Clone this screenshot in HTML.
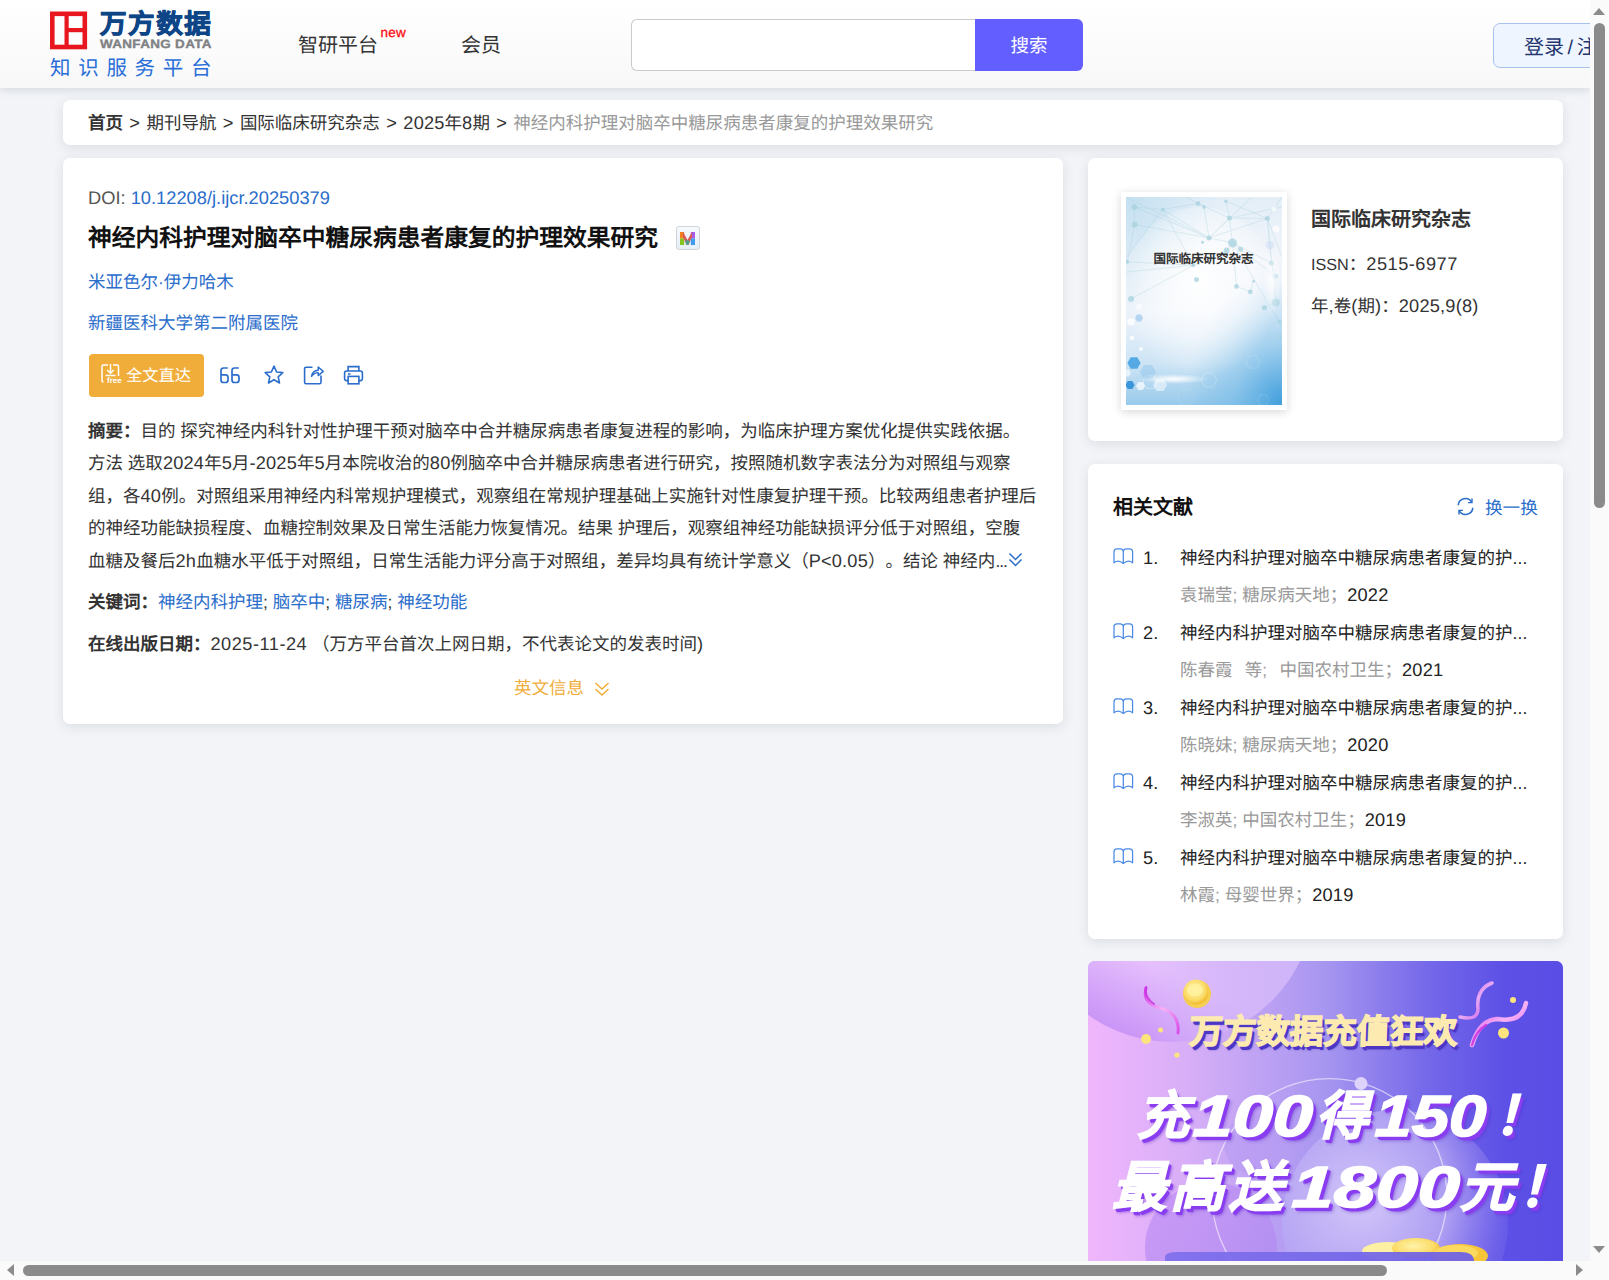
<!DOCTYPE html>
<html lang="zh-CN">
<head>
<meta charset="utf-8">
<title>万方数据知识服务平台</title>
<style>
*{box-sizing:border-box;margin:0;padding:0}
html,body{width:1609px;height:1280px;overflow:hidden}
body{position:relative;background:#f2f4f8;font-family:"Liberation Sans",sans-serif;color:#333;font-size:17.5px;text-rendering:geometricPrecision;text-spacing-trim:space-all}
.l{font-size:1.04em;letter-spacing:.2px}
.sep{word-spacing:1.05px}
.t{position:absolute;white-space:nowrap;line-height:26px;height:26px;margin-top:0.6px}
.abs{position:absolute}
.card{position:absolute;background:#fff;border-radius:7px;box-shadow:0 3px 12px rgba(45,55,65,.115)}
.b{font-weight:bold}
.blue{color:#2a6dcb}
.gray{color:#999}
/* header */
#hdr{position:absolute;left:0;top:0;width:1590px;height:88px;background:linear-gradient(#ffffff,#f8f8f9);box-shadow:0 2px 8px rgba(60,70,100,.16)}
.bt{position:absolute;white-space:nowrap;font-weight:bold;font-style:italic;line-height:64px;height:64px;transform-origin:0 50%}
.big{color:#fff;-webkit-text-stroke:1.6px #fff;text-shadow:2px 3px 0 #8a3df0,3px 4px 0 #8a3df0,4px 5px 3px rgba(90,40,200,.45)}
/* scrollbars */
#vs{position:absolute;left:1590px;top:0;width:19px;height:1280px;background:#fafafa}
#hs{position:absolute;left:0;top:1261px;width:1609px;height:19px;background:#fafafa}
.thumb{position:absolute;background:#8b8b8b;border-radius:6px}
.arr{position:absolute;width:0;height:0;border-style:solid;border-color:transparent}
</style>
</head>
<body>

<!-- ================= HEADER ================= -->
<div id="hdr">
  <!-- logo -->
  <svg class="abs" style="left:50px;top:11px" width="38" height="39" viewBox="0 0 38 39">
    <rect x="2.3" y="2.8" width="32.5" height="33.2" fill="none" stroke="#e8161f" stroke-width="4.6"/>
    <rect x="14.5" y="2" width="4.2" height="34" fill="#e8161f"/>
    <rect x="16" y="17" width="19" height="4.2" fill="#e8161f"/>
  </svg>
  <div class="t b" style="left:100px;top:8.5px;font-size:26.5px;line-height:30px;height:30px;color:#0e4587;letter-spacing:1.6px;-webkit-text-stroke:0.9px #0e4587">万方数据</div>
  <div class="t b" style="left:99.5px;top:37.6px;font-size:12px;line-height:13px;height:13px;color:#808184;letter-spacing:0.3px;-webkit-text-stroke:0.35px #808184;transform:scaleX(1.12);transform-origin:0 50%">WANFANG DATA</div>
  <div class="t" style="left:50px;top:55px;font-size:20.5px;line-height:26px;color:#2a6fd8;letter-spacing:7.7px">知识服务平台</div>

  <div class="t" style="left:298px;top:32px;font-size:20px;color:#333">智研平台</div>
  <div class="t" style="left:380.5px;top:24.6px;font-size:13.5px;line-height:16px;height:16px;color:#fa0f14;letter-spacing:0.3px;-webkit-text-stroke:0.3px #fa0f14">new</div>
  <div class="t" style="left:461px;top:32px;font-size:20px;color:#333">会员</div>

  <!-- search -->
  <div class="abs" style="left:631px;top:19px;width:346px;height:52px;border:1px solid #c9c9cf;border-right:none;border-radius:6px 0 0 6px;background:#fff"></div>
  <div class="abs" style="left:975px;top:19px;width:108px;height:52px;background:#635eff;border-radius:0 6px 6px 0"></div>
  <div class="t" style="left:975px;top:32px;width:108px;text-align:center;color:#fff;font-size:18.5px">搜索</div>

  <!-- login -->
  <div class="abs" style="left:1493px;top:23px;width:140px;height:45px;border:1px solid #a9c2ec;border-radius:7px;background:#eef5ff"></div>
  <div class="t" style="left:1524px;top:34px;font-size:20px;color:#24356f;word-spacing:-2px">登录 / 注册</div>
</div>

<!-- ================= BREADCRUMB ================= -->
<div class="card" style="left:63px;top:100px;width:1500px;height:45px"></div>
<div class="t" style="left:88px;top:109px;color:#333"><span class="b">首页</span><span class="l sep"> &gt; </span>期刊导航<span class="l sep"> &gt; </span>国际临床研究杂志<span class="l sep"> &gt; </span><span class="l">2025</span>年<span class="l">8</span>期<span class="l sep"> &gt; </span><span class="gray">神经内科护理对脑卒中糖尿病患者康复的护理效果研究</span></div>

<!-- ================= MAIN CARD ================= -->
<div class="card" id="main" style="left:63px;top:158px;width:1000px;height:566px">
  <div class="t" style="left:25px;top:26px;font-size:18.3px;color:#555">DOI: <span class="blue">10.12208/j.ijcr.20250379</span></div>
  <div class="t b" style="left:25px;top:65px;font-size:23.75px;line-height:30px;height:30px;color:#111">神经内科护理对脑卒中糖尿病患者康复的护理效果研究</div>
  <div class="abs" style="left:613px;top:68px;width:24px;height:24px;border:1.5px solid #d0d3d8;border-radius:3px;background:linear-gradient(#f7fafd,#e6eef8)">
    <svg class="abs" style="left:3px;top:4.5px" width="15" height="13" viewBox="0 0 15 13">
      <rect x="0" y="0" width="4.2" height="6.5" fill="#f28020"/><rect x="0" y="6.5" width="4.2" height="6.5" fill="#86c520"/>
      <rect x="10.8" y="0" width="4.2" height="6.5" fill="#a45fe0"/><rect x="10.8" y="6.5" width="4.2" height="6.5" fill="#3f9cec"/>
      <path d="M3 0 L7.5 8 L12 0 L12 5 L8.5 13 L6.5 13 L3 5 Z" fill="#d85a5a"/>
      <path d="M5.2 9 L7.5 8 L9.8 9 L8.5 13 L6.5 13 Z" fill="#4da08f"/>
    </svg>
  </div>
  <div class="t blue" style="left:25px;top:110px">米亚色尔·伊力哈木</div>
  <div class="t blue" style="left:25px;top:151px">新疆医科大学第二附属医院</div>

  <!-- button -->
  <div class="abs" style="left:26px;top:196px;width:115px;height:43px;background:#f0ad3a;border-radius:4px"></div>
  <svg class="abs" style="left:37px;top:205px" width="24" height="24" viewBox="0 0 24 24" fill="none" stroke="#fff" stroke-width="1.5">
    <path d="M8 2 H3.5 Q2 2 2 3.5 V17.5 Q2 19 3.5 19"/>
    <path d="M13 2 H17 Q18.5 2 18.5 3.5 V13"/>
    <path d="M10.5 1 V10 M7.2 7 L10.5 10.3 L13.8 7"/>
    <path d="M5.5 12.5 H15.5"/>
  </svg>
  <div class="t b" style="left:44px;top:217px;font-size:8px;line-height:10px;height:10px;color:#fff">free</div>
  <div class="t" style="left:63px;top:204px;color:#fff;font-size:16.25px">全文直达</div>

  <!-- icons -->
  <svg class="abs" style="left:156px;top:208px" width="22" height="18" viewBox="0 0 22 18" fill="none" stroke="#2a6dcb" stroke-width="1.7">
    <path d="M8.8 2 H4.5 Q2 2 2 4.5 V14 Q2 16.5 4.5 16.5 H6.5 Q9 16.5 9 14 V11.3 Q9 8.8 6.5 8.800 H2"/>
    <path d="M19.8 2 H15.5 Q13 2 13 4.5 V14 Q13 16.5 15.5 16.5 H17.5 Q20 16.5 20 14 V11.3 Q20 8.8 17.5 8.800 H13"/>
  </svg>
  <svg class="abs" style="left:200px;top:206px" width="22" height="22" viewBox="0 0 22 22" fill="none" stroke="#2a6dcb" stroke-width="1.6" stroke-linejoin="round">
    <path d="M11 2.2 L13.6 8 L19.8 8.6 L15.2 12.8 L16.5 19 L11 15.8 L5.5 19 L6.8 12.8 L2.2 8.6 L8.4 8 Z"/>
  </svg>
  <svg class="abs" style="left:240px;top:206px" width="22" height="22" viewBox="0 0 22 22" fill="none" stroke="#2a6dcb" stroke-width="1.6">
    <path d="M9.5 3.2 H3 Q1.6 3.2 1.6 4.6 V18.3 Q1.6 19.7 3 19.7 H16.6 Q18 19.7 18 18.3 V11.5"/>
    <path d="M8.6 12.5 Q9.3 6.6 15.2 6.2 V3 L20.2 7.4 L15.2 11.6 V8.6 Q11 8.6 8.6 12.5 Z" stroke-linejoin="round" stroke-width="1.4"/>
  </svg>
  <svg class="abs" style="left:280px;top:206px" width="22" height="22" viewBox="0 0 22 22" fill="none" stroke="#2a6dcb" stroke-width="1.6">
    <path d="M5.1 7 V2.6 H15.9 V7"/>
    <rect x="1.6" y="7" width="17.8" height="9.6" rx="2"/>
    <rect x="5.1" y="12.4" width="10.8" height="7.4" fill="#fff"/>
    <path d="M5 10 H7.4"/>
  </svg>

  <!-- abstract -->
  <div class="t" style="left:25px;top:259px"><span class="b">摘要：</span>目的 探究神经内科针对性护理干预对脑卒中合并糖尿病患者康复进程的影响，为临床护理方案优化提供实践依据。</div>
  <div class="t" style="left:25px;top:291.5px">方法 选取<span class="l">2024</span>年<span class="l">5</span>月<span class="l">-2025</span>年<span class="l">5</span>月本院收治的<span class="l">80</span>例脑卒中合并糖尿病患者进行研究，按照随机数字表法分为对照组与观察</div>
  <div class="t" style="left:25px;top:324px">组，各<span class="l">40</span>例。对照组采用神经内科常规护理模式，观察组在常规护理基础上实施针对性康复护理干预。比较两组患者护理后</div>
  <div class="t" style="left:25px;top:356.5px">的神经功能缺损程度、血糖控制效果及日常生活能力恢复情况。结果 护理后，观察组神经功能缺损评分低于对照组，空腹</div>
  <div class="t" style="left:25px;top:389px">血糖及餐后<span class="l">2h</span>血糖水平低于对照组，日常生活能力评分高于对照组，差异均具有统计学意义（<span class="l">P&lt;0.05</span>）。结论 神经内<span style="letter-spacing:-1px">...</span></div>
  <svg class="abs" style="left:945px;top:394px" width="15" height="16" viewBox="0 0 15 16" fill="none" stroke="#2a6dcb" stroke-width="1.5"><path d="M1.5 1.5 L7.5 7.5 L13.5 1.5 M1.5 7.5 L7.5 13.5 L13.5 7.5"/></svg>

  <div class="t" style="left:25px;top:430px"><span class="b">关键词：</span><span class="blue">神经内科护理</span>; <span class="blue">脑卒中</span>; <span class="blue">糖尿病</span>; <span class="blue">神经功能</span></div>
  <div class="t" style="left:25px;top:472px"><span class="b">在线出版日期：</span><span class="l" style="letter-spacing:.5px">2025-11-24</span>&nbsp;（万方平台首次上网日期，不代表论文的发表时间<span class="l">)</span></div>
  <div class="t" style="left:451px;top:516px;color:#f0ad3a">英文信息</div>
  <svg class="abs" style="left:531px;top:523px" width="16" height="16" viewBox="0 0 16 16" fill="none" stroke="#f0ad3a" stroke-width="1.5"><path d="M1.5 2 L8 8 L14.500 2 M1.5 8 L8 14 L14.5 8"/></svg>
</div>

<!-- ================= JOURNAL CARD ================= -->
<div class="card" style="left:1088px;top:158px;width:475px;height:283px">
  <div class="abs" style="left:33px;top:34px;width:166px;height:218px;background:#fff;box-shadow:0 2px 9px rgba(0,0,0,.16)"></div>
  <div class="abs" id="cover" style="left:38px;top:39px;width:156px;height:208px;overflow:hidden;background:#dcebf6">
    <svg width="156" height="208" viewBox="0 0 156 208" style="display:block">
      <defs>
        <linearGradient id="cv1" x1="0" y1="0" x2="0" y2="1"><stop offset="0" stop-color="#e3eef7"/><stop offset=".3" stop-color="#f2f5fa"/><stop offset=".55" stop-color="#edf3fa"/><stop offset=".8" stop-color="#cde4f5"/><stop offset="1" stop-color="#98caeb"/></linearGradient>
        <radialGradient id="cv2" cx=".5" cy=".4" r=".5"><stop offset="0" stop-color="#fff" stop-opacity=".95"/><stop offset=".6" stop-color="#fff" stop-opacity=".5"/><stop offset="1" stop-color="#fff" stop-opacity="0"/></radialGradient>
        <radialGradient id="cv3" cx="1" cy="1" r=".62"><stop offset="0" stop-color="#3d9cdb" stop-opacity=".95"/><stop offset=".5" stop-color="#5aaee3" stop-opacity=".4"/><stop offset="1" stop-color="#5aaee3" stop-opacity="0"/></radialGradient>
        <radialGradient id="cv4" cx="0" cy="0" r=".6"><stop offset="0" stop-color="#bcdcef" stop-opacity=".8"/><stop offset="1" stop-color="#bcdcef" stop-opacity="0"/></radialGradient>
        <radialGradient id="cv5" cx=".5" cy=".5" r=".5"><stop offset="0" stop-color="#fff" stop-opacity="1"/><stop offset="1" stop-color="#fff" stop-opacity="0"/></radialGradient>
      </defs>
      <rect width="156" height="208" fill="url(#cv1)"/>
      <rect width="156" height="208" fill="url(#cv4)"/>
      <rect width="156" height="208" fill="url(#cv3)"/>
      <ellipse cx="74" cy="105" rx="80" ry="95" fill="url(#cv2)"/>
      <g stroke="#9fcdd9" stroke-width="0.7" opacity=".42"><line x1="8.3" y1="10.1" x2="36.7" y2="12.5"/><line x1="8.3" y1="10.1" x2="8.6" y2="27.5"/><line x1="36.7" y1="12.5" x2="83.0" y2="40.9"/><line x1="36.7" y1="12.5" x2="67.4" y2="68.3"/><line x1="8.3" y1="10.1" x2="83.0" y2="40.9"/><line x1="8.6" y1="27.5" x2="83.0" y2="40.9"/><line x1="72.0" y1="6.4" x2="78.0" y2="10.1"/><line x1="72.0" y1="6.4" x2="103.5" y2="21.1"/><line x1="78.0" y1="10.1" x2="83.0" y2="40.9"/><line x1="99.9" y1="4.2" x2="103.5" y2="21.1"/><line x1="103.5" y1="21.1" x2="141.4" y2="21.5"/><line x1="103.5" y1="21.1" x2="106.5" y2="45.9"/><line x1="103.5" y1="21.1" x2="83.0" y2="40.9"/><line x1="83.0" y1="40.9" x2="106.5" y2="45.9"/><line x1="106.5" y1="45.9" x2="114.6" y2="52.3"/><line x1="106.5" y1="45.9" x2="100.6" y2="53.6"/><line x1="100.6" y1="53.6" x2="67.4" y2="68.3"/><line x1="1.3" y1="64.8" x2="67.4" y2="68.3"/><line x1="5.0" y1="101.9" x2="67.4" y2="68.3"/><line x1="106.5" y1="45.9" x2="110.5" y2="89.4"/><line x1="110.5" y1="89.4" x2="124.3" y2="94.9"/><line x1="124.3" y1="94.9" x2="127.6" y2="84.1"/><line x1="114.6" y1="52.3" x2="149.6" y2="79.3"/><line x1="141.4" y1="21.5" x2="145.4" y2="66.1"/><line x1="145.4" y1="66.1" x2="149.6" y2="79.3"/><line x1="149.6" y1="79.3" x2="149.6" y2="105.6"/><line x1="149.6" y1="105.6" x2="138.4" y2="110.7"/><line x1="141.4" y1="21.5" x2="149.6" y2="105.6"/><line x1="99.9" y1="4.2" x2="141.4" y2="21.5"/><line x1="36.7" y1="12.5" x2="72.0" y2="6.4"/><line x1="8.6" y1="27.5" x2="1.3" y2="64.8"/><line x1="106.5" y1="45.9" x2="145.4" y2="66.1"/><line x1="83.0" y1="40.9" x2="141.4" y2="21.5"/><line x1="0.0" y1="0.0" x2="83.0" y2="40.9"/><line x1="126.0" y1="0.0" x2="83.0" y2="40.9"/><line x1="60.0" y1="0.0" x2="72.0" y2="6.4"/><line x1="156.0" y1="10.0" x2="103.5" y2="21.1"/><line x1="156.0" y1="0.0" x2="141.4" y2="21.5"/><line x1="0.0" y1="75.0" x2="67.4" y2="68.3"/><line x1="36.7" y1="12.5" x2="0.0" y2="60.0"/><line x1="141.4" y1="21.5" x2="156.0" y2="60.0"/><line x1="106.5" y1="45.9" x2="156.0" y2="130.0"/></g>
      <g fill="#a7d3df" opacity=".75"><circle cx="8.3" cy="10.1" r="3.0"/><circle cx="8.6" cy="27.5" r="3.0"/><circle cx="36.7" cy="12.5" r="2.0"/><circle cx="72.0" cy="6.4" r="2.4"/><circle cx="78.0" cy="10.1" r="1.8"/><circle cx="99.9" cy="4.2" r="1.8"/><circle cx="103.5" cy="21.1" r="2.5"/><circle cx="141.4" cy="21.5" r="2.5"/><circle cx="83.0" cy="40.9" r="2.5"/><circle cx="76.6" cy="45.3" r="1.5"/><circle cx="106.5" cy="45.9" r="4.5"/><circle cx="114.6" cy="52.3" r="2.5"/><circle cx="100.6" cy="53.6" r="3.0"/><circle cx="67.4" cy="68.3" r="2.0"/><circle cx="70.5" cy="82.6" r="2.5"/><circle cx="110.5" cy="89.4" r="2.4"/><circle cx="124.3" cy="94.9" r="2.4"/><circle cx="127.6" cy="84.1" r="1.5"/><circle cx="5.0" cy="101.9" r="3.0"/><circle cx="149.6" cy="79.3" r="2.5"/><circle cx="149.6" cy="105.6" r="4.0"/><circle cx="138.4" cy="110.7" r="2.5"/><circle cx="145.4" cy="66.1" r="2.5"/><circle cx="1.3" cy="64.8" r="2.0"/><circle cx="153.7" cy="124.8" r="2.0"/><circle cx="153.7" cy="139.5" r="2.0"/></g>
      <polygon points="9.2,125.0 7.1,128.6 2.9,128.6 0.8,125.0 2.9,121.4 7.1,121.4" fill="#fff" opacity="0.8"/><polygon points="17.0,121.0 15.0,124.5 11.0,124.5 9.0,121.0 11.0,117.5 15.0,117.5" fill="#9cc8ee" opacity="0.7"/><polygon points="16.6,110.0 14.8,113.1 11.2,113.1 9.4,110.0 11.2,106.9 14.8,106.9" fill="#fff" opacity="0.55"/><polygon points="8.6,141.0 7.3,143.3 4.7,143.3 3.4,141.0 4.7,138.7 7.3,138.7" fill="#fff" opacity="0.8"/><polygon points="14.6,166.0 11.3,171.7 4.7,171.7 1.4,166.0 4.7,160.3 11.3,160.3" fill="#3f9fe0" opacity="0.85"/><polygon points="8.6,188.0 6.3,192.0 1.7,192.0 -0.6,188.0 1.7,184.0 6.3,184.0" fill="#2e8fd8" opacity="0.9"/><polygon points="19.1,189.0 16.8,193.0 12.2,193.0 9.9,189.0 12.2,185.0 16.8,185.0" fill="#fff" opacity="0.7"/><polygon points="31.4,185.0 27.7,191.4 20.3,191.4 16.6,185.0 20.3,178.6 27.7,178.6" fill="none" stroke="#fff" stroke-width="0.7" opacity="0.6"/><polygon points="41.0,188.0 37.5,194.1 30.5,194.1 27.0,188.0 30.5,181.9 37.5,181.9" fill="#fff" opacity="0.5"/><polygon points="91.0,183.0 87.0,189.9 79.0,189.9 75.0,183.0 79.0,176.1 87.0,176.1" fill="none" stroke="#fff" stroke-width="0.7" opacity="0.35"/><polygon points="134.0,165.0 130.5,171.1 123.5,171.1 120.0,165.0 123.5,158.9 130.5,158.9" fill="none" stroke="#fff" stroke-width="0.7" opacity="0.25"/><polygon points="143.0,203.0 140.0,208.2 134.0,208.2 131.0,203.0 134.0,197.8 140.0,197.8" fill="none" stroke="#fff" stroke-width="0.7" opacity="0.2"/><polygon points="17.0,152.0 16.0,153.7 14.0,153.7 13.0,152.0 14.0,150.3 16.0,150.3" fill="#fff" opacity="0.9"/><polygon points="30.0,175.0 26.0,181.9 18.0,181.9 14.0,175.0 18.0,168.1 26.0,168.1" fill="#7fbdea" opacity="0.35"/><polygon points="69.0,200.0 64.5,207.8 55.5,207.8 51.0,200.0 55.5,192.2 64.5,192.2" fill="none" stroke="#fff" stroke-width="0.7" opacity="0.15"/><polygon points="5.0,176.0 3.0,179.5 -1.0,179.5 -3.0,176.0 -1.0,172.5 3.0,172.5" fill="#fff" opacity="0.6"/><polygon points="154.0,32.0 152.0,35.5 148.0,35.5 146.0,32.0 148.0,28.5 152.0,28.5" fill="#fff" opacity="0.7"/><polygon points="148.5,48.0 146.2,51.9 141.8,51.9 139.5,48.0 141.8,44.1 146.2,44.1" fill="#c9d9f3" opacity="0.5"/><polygon points="150.6,12.0 149.3,14.3 146.7,14.3 145.4,12.0 146.7,9.7 149.3,9.7" fill="#fff" opacity="0.7"/>
      <ellipse cx="48" cy="182" rx="34" ry="5" fill="url(#cv5)"/>
      <ellipse cx="146" cy="85" rx="9" ry="34" fill="url(#cv5)" opacity=".8"/>
    </svg>
  </div>
  <div class="t b" style="left:65.5px;top:87px;font-size:12.5px;color:#333">国际临床研究杂志</div>
  <div class="t b" style="left:223px;top:48px;font-size:20px;color:#333">国际临床研究杂志</div>
  <div class="t" style="left:223px;top:92px;color:#333"><span style="font-size:16.2px">ISSN</span>：<span class="l" style="letter-spacing:.5px">2515-6977</span></div>
  <div class="t" style="left:223px;top:134px;color:#333">年<span class="l">,</span>卷<span class="l">(</span>期<span class="l">)</span>：<span class="l">2025,9(8)</span></div>
</div>

<!-- ================= RELATED ================= -->
<div class="card" id="rel" style="left:1088px;top:464px;width:475px;height:475px">
  <div class="t b" style="left:25px;top:30px;font-size:20px;color:#111">相关文献</div>
  <svg class="abs" style="left:368px;top:33px" width="19" height="19" viewBox="0 0 19 19" fill="none" stroke="#2a6dcb" stroke-width="1.6"><path d="M2.2 8.2 A7.2 7.2 0 0 1 15.6 5.2 M16.8 10.8 A7.2 7.2 0 0 1 3.4 13.8"/><path d="M16 1.6 V5.6 H12 M3 17.400 V13.4 H7" stroke-width="1.4"/></svg>
  <div class="t blue" style="left:397px;top:30px;font-size:17.6px">换一换</div>
  <svg class="abs" style="left:25px;top:84px" width="21" height="17" viewBox="0 0 21 17" fill="none" stroke="#4a8ae6" stroke-width="1.25" stroke-linejoin="round"><path d="M10.3 15.6 Q5.5 11.2 1 14.8 V3.8 Q1 0.8 4 0.8 H7 Q10.3 0.8 10.3 4.2 V15.6 Q15.1 11.2 19.6 14.8 V3.8 Q19.6 0.8 16.6 0.8 H13.6 Q10.3 0.8 10.3 4.2"/></svg>
  <div class="t" style="left:55px;top:80px;color:#222"><span class="l">1.</span></div>
  <div class="t" style="left:92px;top:80px;color:#222">神经内科护理对脑卒中糖尿病患者康复的护<span style="letter-spacing:0.2px">...</span></div>
  <div class="t" style="left:92px;top:117.5px;color:#999">袁瑞莹; 糖尿病天地；<span class="l" style="color:#222">2022</span></div>
  <svg class="abs" style="left:25px;top:159px" width="21" height="17" viewBox="0 0 21 17" fill="none" stroke="#4a8ae6" stroke-width="1.25" stroke-linejoin="round"><path d="M10.3 15.6 Q5.5 11.2 1 14.8 V3.8 Q1 0.8 4 0.8 H7 Q10.3 0.8 10.3 4.2 V15.6 Q15.1 11.2 19.6 14.8 V3.8 Q19.6 0.8 16.6 0.8 H13.6 Q10.3 0.8 10.3 4.2"/></svg>
  <div class="t" style="left:55px;top:155px;color:#222"><span class="l">2.</span></div>
  <div class="t" style="left:92px;top:155px;color:#222">神经内科护理对脑卒中糖尿病患者康复的护<span style="letter-spacing:0.2px">...</span></div>
  <div class="t" style="left:92px;top:192.5px;color:#999;word-spacing:1.3px">陈春霞&nbsp; 等;&nbsp; 中国农村卫生；<span class="l" style="color:#222">2021</span></div>
  <svg class="abs" style="left:25px;top:234px" width="21" height="17" viewBox="0 0 21 17" fill="none" stroke="#4a8ae6" stroke-width="1.25" stroke-linejoin="round"><path d="M10.3 15.6 Q5.5 11.2 1 14.8 V3.8 Q1 0.8 4 0.8 H7 Q10.3 0.8 10.3 4.2 V15.6 Q15.1 11.2 19.6 14.8 V3.8 Q19.6 0.8 16.6 0.8 H13.6 Q10.3 0.8 10.3 4.2"/></svg>
  <div class="t" style="left:55px;top:230px;color:#222"><span class="l">3.</span></div>
  <div class="t" style="left:92px;top:230px;color:#222">神经内科护理对脑卒中糖尿病患者康复的护<span style="letter-spacing:0.2px">...</span></div>
  <div class="t" style="left:92px;top:267.5px;color:#999">陈晓妹; 糖尿病天地；<span class="l" style="color:#222">2020</span></div>
  <svg class="abs" style="left:25px;top:309px" width="21" height="17" viewBox="0 0 21 17" fill="none" stroke="#4a8ae6" stroke-width="1.25" stroke-linejoin="round"><path d="M10.3 15.6 Q5.5 11.2 1 14.8 V3.8 Q1 0.8 4 0.8 H7 Q10.3 0.8 10.3 4.2 V15.6 Q15.1 11.2 19.6 14.8 V3.8 Q19.6 0.8 16.6 0.8 H13.6 Q10.3 0.8 10.3 4.2"/></svg>
  <div class="t" style="left:55px;top:305px;color:#222"><span class="l">4.</span></div>
  <div class="t" style="left:92px;top:305px;color:#222">神经内科护理对脑卒中糖尿病患者康复的护<span style="letter-spacing:0.2px">...</span></div>
  <div class="t" style="left:92px;top:342.5px;color:#999">李淑英; 中国农村卫生；<span class="l" style="color:#222">2019</span></div>
  <svg class="abs" style="left:25px;top:384px" width="21" height="17" viewBox="0 0 21 17" fill="none" stroke="#4a8ae6" stroke-width="1.25" stroke-linejoin="round"><path d="M10.3 15.6 Q5.5 11.2 1 14.8 V3.8 Q1 0.8 4 0.8 H7 Q10.3 0.8 10.3 4.2 V15.6 Q15.1 11.2 19.6 14.8 V3.8 Q19.6 0.8 16.6 0.8 H13.6 Q10.3 0.8 10.3 4.2"/></svg>
  <div class="t" style="left:55px;top:380px;color:#222"><span class="l">5.</span></div>
  <div class="t" style="left:92px;top:380px;color:#222">神经内科护理对脑卒中糖尿病患者康复的护<span style="letter-spacing:0.2px">...</span></div>
  <div class="t" style="left:92px;top:417.5px;color:#999">林霞; 母婴世界；<span class="l" style="color:#222">2019</span></div>
</div>

<!-- ================= BANNER ================= -->
<div class="abs" id="banner" style="left:1088px;top:961px;width:475px;height:300px;border-radius:7px 7px 0 0;overflow:hidden;background:#a796f0">
  <svg class="abs" style="left:0;top:0" width="475" height="300" viewBox="0 0 475 300">
    <defs>
      <linearGradient id="bn1" x1="0" y1="0" x2="1" y2="0"><stop offset="0" stop-color="#f0b6fc"/><stop offset=".22" stop-color="#d6aef7"/><stop offset=".5" stop-color="#a796f0"/><stop offset=".72" stop-color="#7467e9"/><stop offset=".88" stop-color="#5c50e6"/><stop offset="1" stop-color="#594de5"/></linearGradient>
      <linearGradient id="bn2" gradientUnits="userSpaceOnUse" x1="60" y1="0" x2="20" y2="85"><stop offset="0" stop-color="#e6c0fd"/><stop offset=".55" stop-color="#d3a2f9"/><stop offset="1" stop-color="#c38df5"/></linearGradient>
      <linearGradient id="bn2b" gradientUnits="userSpaceOnUse" x1="60" y1="0" x2="230" y2="0"><stop offset="0" stop-color="#cdb2f8" stop-opacity="0"/><stop offset=".5" stop-color="#cdb2f8" stop-opacity=".7"/><stop offset="1" stop-color="#c4b0f8" stop-opacity=".75"/></linearGradient>
      <radialGradient id="bn3" cx=".35" cy=".4" r=".65"><stop offset="0" stop-color="#d3c7f9"/><stop offset=".6" stop-color="#b7a7f4" stop-opacity=".85"/><stop offset="1" stop-color="#8d7eee" stop-opacity=".25"/></radialGradient>
      <linearGradient id="bn4" x1="0" y1="0" x2="1" y2="1"><stop offset="0" stop-color="#c795f6"/><stop offset="1" stop-color="#a985ef" stop-opacity=".7"/></linearGradient>
      <linearGradient id="bn5" x1="0" y1="0" x2="1" y2="0"><stop offset="0" stop-color="#7f70ec"/><stop offset="1" stop-color="#6d5fe6"/></linearGradient>
      <radialGradient id="coin" cx=".45" cy=".4" r=".6"><stop offset="0" stop-color="#fff3a8"/><stop offset=".7" stop-color="#fbdc6a"/><stop offset="1" stop-color="#f3b928"/></radialGradient>
      <linearGradient id="rib" x1="0" y1="0" x2="1" y2="1"><stop offset="0" stop-color="#d23be8"/><stop offset=".5" stop-color="#f6b3f6"/><stop offset="1" stop-color="#d94fe9"/></linearGradient>
    </defs>
    <rect width="475" height="300" fill="url(#bn1)"/>
    <circle cx="83.5" cy="-61.4" r="142.300" fill="url(#bn2)"/><circle cx="83.5" cy="-61.4" r="142.300" fill="url(#bn2b)"/>
    <circle cx="307" cy="262" r="113" fill="url(#bn3)"/>
    <circle cx="123" cy="287" r="66" fill="url(#bn4)" opacity=".85"/>
    <circle cx="166" cy="183" r="30" fill="#b79bf2" opacity=".55"/>
    <circle cx="241.5" cy="235" r="117.400" fill="none" stroke="#fff" stroke-opacity=".55" stroke-width="1.4"/>
    <circle cx="273" cy="122.500" r="6.5" fill="#ddd2f9"/>
    
    <!-- coins bottom -->
    <ellipse cx="300" cy="290" rx="26" ry="9" fill="#fdf0a2"/>
    <ellipse cx="328" cy="287" rx="24" ry="10" fill="url(#coin)"/>
    <ellipse cx="372" cy="295" rx="28" ry="12" fill="#f7c53a"/>
    <ellipse cx="368" cy="292" rx="22" ry="8" fill="#fbd95e"/>
    <path d="M77 300 V296 Q77 291 90 291 H372 Q386 291 386 300 Z" fill="url(#bn5)" opacity=".93"/>
    <!-- deco -->
    <circle cx="109" cy="33" r="14" fill="#f5cf52"/><circle cx="108" cy="31" r="12.500" fill="url(#coin)"/><ellipse cx="107" cy="29" rx="8" ry="6.500" fill="#fff2a0" opacity=".8"/>
    <circle cx="58" cy="78" r="5" fill="#fbe47e"/><circle cx="72.5" cy="69" r="2.5" fill="#fbe47e"/><circle cx="89" cy="94" r="2.600" fill="#fbe47e"/>
    <circle cx="425" cy="39" r="3" fill="#fbe47e"/><circle cx="415.5" cy="72" r="5.500" fill="#fbe47e"/>
    <path d="M58 27 Q54 42 72 47 Q92 52 90 72" fill="none" stroke="url(#rib)" stroke-width="3" stroke-linecap="round"/>
    <path d="M58 26 Q56 36 66 43" fill="none" stroke="#c92fe0" stroke-width="2" stroke-linecap="round" opacity=".8"/>
    <path d="M404 22 Q388 28 390 48 Q390 60 372 56" fill="none" stroke="url(#rib)" stroke-width="3.500" stroke-linecap="round" opacity=".9"/>
    <path d="M438 42 Q434 62 410 58 Q392 58 384 84" fill="none" stroke="url(#rib)" stroke-width="4.500" stroke-linecap="round"/>
    <path d="M398 64 Q388 70 384 84" fill="none" stroke="#c92fe0" stroke-width="2.500" stroke-linecap="round" opacity=".85"/>
  </svg>
  <div class="bt" style="left:102px;top:51px;font-size:33px;line-height:40px;height:40px;font-style:normal;transform:skewX(-2deg);color:#fceab0;letter-spacing:0.4px;-webkit-text-stroke:1.7px #fceab0;text-shadow:1.5px 2.5px 0 #4b36c6,2.5px 3.5px 0 #4b36c6,3px 4px 2px rgba(70,40,170,.5)">万方数据充值狂欢</div>
  <div class="bt big" style="left:49px;top:124px;font-size:52px">充</div>
  <div class="bt big num" style="left:105px;top:124px;font-size:58px;transform:skewX(-2deg) scaleX(1.24)">100</div>
  <div class="bt big" style="left:228px;top:124px;font-size:52px">得</div>
  <div class="bt big num" style="left:287px;top:124px;font-size:58px;transform:skewX(-2deg) scaleX(1.15)">150</div>
  <div class="bt big" style="left:406px;top:124px;font-size:52px">！</div>
  <div class="bt big" style="left:24px;top:195px;font-size:54px;letter-spacing:4.5px">最高送</div>
  <div class="bt big num" style="left:204px;top:195px;font-size:58px;transform:skewX(-2deg) scaleX(1.3)">1800</div>
  <div class="bt big" style="left:372px;top:195px;font-size:54px">元</div>
  <div class="bt big" style="left:430px;top:195px;font-size:54px">！</div>
</div>

<!-- ================= SCROLLBARS ================= -->
<div id="vs">
  <div class="arr" style="left:3px;top:8px;border-width:0 6.5px 7px 6.5px;border-bottom-color:#8b8b8b"></div>
  <div class="thumb" style="left:4px;top:23px;width:11px;height:485px"></div>
  <div class="arr" style="left:3px;top:1246px;border-width:7px 6.5px 0 6.5px;border-top-color:#8b8b8b"></div>
</div>
<div id="hs">
  <div class="arr" style="left:7px;top:3px;border-width:6.5px 7px 6.5px 0;border-right-color:#8b8b8b"></div>
  <div class="thumb" style="left:23px;top:4px;width:1364px;height:11px"></div>
  <div class="arr" style="left:1576px;top:3px;border-width:6.5px 0 6.5px 7px;border-left-color:#8b8b8b"></div>
</div>
</body>
</html>
